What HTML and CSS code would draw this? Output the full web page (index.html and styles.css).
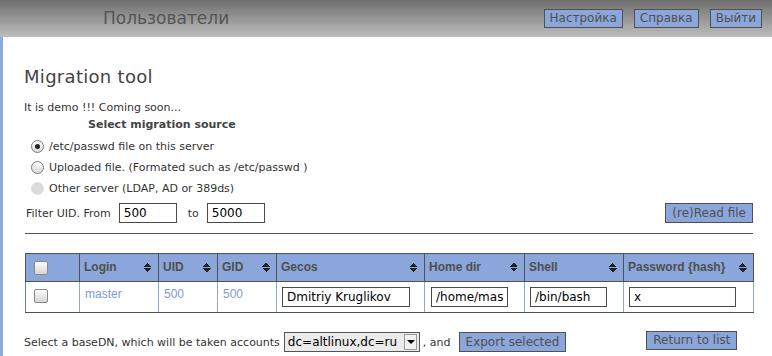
FILE: index.html
```html
<!DOCTYPE html>
<html lang="ru">
<head>
    <meta charset="UTF-8">
    <title>Migration tool</title>
    <link rel="stylesheet" href="styles.css">
</head>
<body>
    <div class="topbar">
        <div class="title">Пользователи</div>
        <nav class="menu">
            <a class="btn" href="#">Настройка</a>
            <a class="btn" href="#">Справка</a>
            <a class="btn" href="#">Выйти</a>
        </nav>
    </div>

    <div class="page">
        <h2>Migration tool</h2>
        <p class="note">It is demo !!! Coming soon...</p>
        <div class="legend">Select migration source</div>

        <label class="radio-row"><input type="radio" name="src" checked> /etc/passwd file on this server</label>
        <label class="radio-row"><input type="radio" name="src"> Uploaded file. (Formated such as /etc/passwd )</label>
        <label class="radio-row"><input type="radio" name="src" disabled> Other server (LDAP, AD or 389ds)</label>

        <div class="filter">
            <span class="filter-label">Filter UID. From</span>
            <input type="text" class="field uid-from" value="500">
            <span class="filter-to">to</span>
            <input type="text" class="field uid-to" value="5000">
            <button class="btn read-btn">(re)Read file</button>
        </div>

        <hr>

        <table class="users">
            <colgroup>
                <col style="width:54px">
                <col style="width:79px">
                <col style="width:59px">
                <col style="width:59px">
                <col style="width:148px">
                <col style="width:100px">
                <col style="width:99px">
                <col style="width:130px">
            </colgroup>
            <thead>
                <tr>
                    <th class="check-cell"><input type="checkbox" class="check"></th>
                    <th><div class="th-inner">Login <span class="sort"></span></div></th>
                    <th><div class="th-inner">UID <span class="sort"></span></div></th>
                    <th><div class="th-inner">GID <span class="sort"></span></div></th>
                    <th><div class="th-inner">Gecos <span class="sort"></span></div></th>
                    <th><div class="th-inner">Home dir <span class="sort"></span></div></th>
                    <th><div class="th-inner">Shell <span class="sort"></span></div></th>
                    <th><div class="th-inner">Password {hash} <span class="sort"></span></div></th>
                </tr>
            </thead>
            <tbody>
                <tr>
                    <td class="check-cell"><input type="checkbox" class="check"></td>
                    <td>master</td>
                    <td>500</td>
                    <td>500</td>
                    <td><input type="text" class="field w-gecos" value="Dmitriy Kruglikov"></td>
                    <td class="home-cell"><input type="text" class="field w-home" value="/home/master"></td>
                    <td><input type="text" class="field w-shell" value="/bin/bash"></td>
                    <td><input type="text" class="field w-pass" value="x"></td>
                </tr>
            </tbody>
        </table>

        <div class="actions">
            <span class="basedn-label">Select a baseDN, which will be taken accounts</span>
            <div class="select-wrap">
                <select class="basedn">
                    <option>dc=altlinux,dc=ru</option>
                </select>
                <span class="select-arrow"></span>
            </div>
            <span class="and">, and</span>
            <button class="btn export-btn">Export selected</button>
            <button class="btn return-btn">Return to list</button>
        </div>
    </div>
</body>
</html>
```

FILE: styles.css
```css
:root {
    --blue: #8ba6da;
    --border: #505050;
    --text: #444;
}

* {
    box-sizing: border-box;
}

body {
    margin: 0;
    font-family: "DejaVu Sans", Verdana, sans-serif;
    font-size: 11px;
    color: var(--text);
    background: #fff;
    overflow: hidden;
}

/* top bar */
.topbar {
    height: 37px;
    display: flex;
    align-items: center;
    justify-content: space-between;
    background: linear-gradient(#6f6f6f, #bdbdbd);
    padding: 0 10px 0 103px;
}

.title {
    font-size: 17px;
    color: #555;
    margin-top: -1px;
}

.menu {
    display: flex;
    gap: 11px;
    margin-top: -1px;
}

.btn {
    display: inline-block;
    background: var(--blue);
    border: 1px solid var(--border);
    color: #505050;
    font-family: "DejaVu Sans", Verdana, sans-serif;
    font-size: 12px;
    line-height: 16px;
    padding: 1px 6px;
    text-decoration: none;
    cursor: pointer;
}

.menu .btn {
    line-height: 15px;
    padding: 1px 5px;
}

/* page */
.page {
    border-left: 3px solid #8faade;
    height: 319px;
    padding: 29px 19px 0 21px;
}

h2 {
    margin: 0;
    font-size: 18px;
    line-height: 22px;
    font-weight: normal;
    letter-spacing: 0.3px;
    color: #444;
}

.note {
    margin: 13px 0 0;
    line-height: 14px;
    color: #333;
}

.legend {
    margin-top: 3px;
    padding-left: 64px;
    font-weight: bold;
    line-height: 14px;
    color: #444;
}

.radio-row {
    display: flex;
    align-items: center;
    height: 21px;
    color: #333;
    padding-left: 7px;
}

.radio-row:first-of-type {
    margin-top: 4px;
}

.radio-row input {
    appearance: none;
    width: 13px;
    height: 13px;
    margin: 0 5px 0 0;
    border: 1px solid #7a7a7a;
    border-radius: 50%;
    background: linear-gradient(#fdfdfd, #d9d9d9);
    display: grid;
    place-content: center;
}

.radio-row input:checked::before {
    content: "";
    width: 5px;
    height: 5px;
    border-radius: 50%;
    background: #222;
}

.radio-row input:disabled {
    border-color: #dcdcdc;
    background: #dcdcdc;
}

/* filter row */
.filter {
    display: flex;
    align-items: center;
    margin-top: 4px;
    height: 20px;
    padding-left: 2px;
    color: #333;
}

.field {
    height: 20px;
    border: 1px solid #4a4a4a;
    padding: 0 4px;
    font-family: "DejaVu Sans", Verdana, sans-serif;
    font-size: 12px;
    color: #000;
    background: #fff;
    outline: none;
}

.uid-from {
    width: 58px;
    margin-left: 8px;
}

.filter-to {
    margin-left: 11px;
}

.uid-to {
    width: 58px;
    margin-left: 8px;
}

.read-btn {
    margin-left: auto;
    margin-top: -1px;
}

hr {
    border: 0;
    border-top: 1px solid #555;
    margin: 10px 0 0 1px;
    height: 0;
}

/* table */
.users {
    margin: 19px 0 0 1px;
    width: 728px;
    table-layout: fixed;
    border-collapse: collapse;
    font-family: "Liberation Sans", Arial, sans-serif;
    font-size: 12px;
}

.users th {
    height: 28px;
    background: var(--blue);
    border: 1px solid var(--border);
    color: #4f4f4f;
    font-weight: bold;
    text-align: left;
    padding: 0 6px 2px 4px;
    line-height: 14px;
    vertical-align: middle;
}

.th-inner {
    display: flex;
    justify-content: space-between;
    align-items: center;
}

.sort {
    width: 8px;
    height: 9px;
    margin-top: 2px;
    background:
        linear-gradient(to bottom right, transparent 50%, #222 50%) left top / 4px 4px no-repeat,
        linear-gradient(to bottom left, transparent 50%, #222 50%) right top / 4px 4px no-repeat,
        linear-gradient(to top right, transparent 50%, #222 50%) left bottom / 4px 4px no-repeat,
        linear-gradient(to top left, transparent 50%, #222 50%) right bottom / 4px 4px no-repeat;
}

.users td {
    height: 31px;
    border-left: 1px solid var(--blue);
    border-right: 1px solid var(--blue);
    border-bottom: 1px solid var(--border);
    padding: 5px 4px 0 5px;
    vertical-align: top;
    color: #7f9bd5;
    line-height: 14px;
}

.users td:first-child {
    border-left-color: #6b7fa6;
}

.users .check-cell {
    padding: 0 0 0 8px;
    vertical-align: middle;
}

.users td.check-cell {
    vertical-align: top;
    padding-top: 6px;
}

.users td.home-cell {
    padding-left: 6px;
}

.check {
    appearance: none;
    display: block;
    width: 14px;
    height: 14px;
    margin: 1px 0 0;
    border: 1px solid #8a8a8a;
    border-radius: 2px;
    background: linear-gradient(#fbfbfb, #d6d6d6);
}

.w-gecos { width: 128px; }
.w-home { width: 77px; }
.w-shell { width: 77px; }
.w-pass { width: 107px; }

/* bottom actions */
.actions {
    display: flex;
    align-items: center;
    margin-top: 19px;
    height: 20px;
    color: #333;
}

.select-wrap {
    position: relative;
    margin-left: 4px;
}

.basedn {
    appearance: none;
    width: 136px;
    height: 20px;
    border: 1px solid #555;
    border-radius: 0;
    background: #ebebeb;
    font-family: "DejaVu Sans", Verdana, sans-serif;
    font-size: 12px;
    color: #000;
    padding: 0 0 0 3px;
}

.select-arrow {
    position: absolute;
    right: 3px;
    top: 2px;
    width: 13px;
    height: 16px;
    border: 1px solid #9a9a9a;
    background: #f2f2f2;
    pointer-events: none;
}

.select-arrow::after {
    content: "";
    position: absolute;
    left: 2px;
    top: 5px;
    border-left: 4px solid transparent;
    border-right: 4px solid transparent;
    border-top: 4px solid #000;
}

.and {
    margin-left: 3px;
}

.export-btn {
    margin-left: 8px;
}

.return-btn {
    margin-left: 80px;
    margin-top: -4px;
    line-height: 15px;
}
```
